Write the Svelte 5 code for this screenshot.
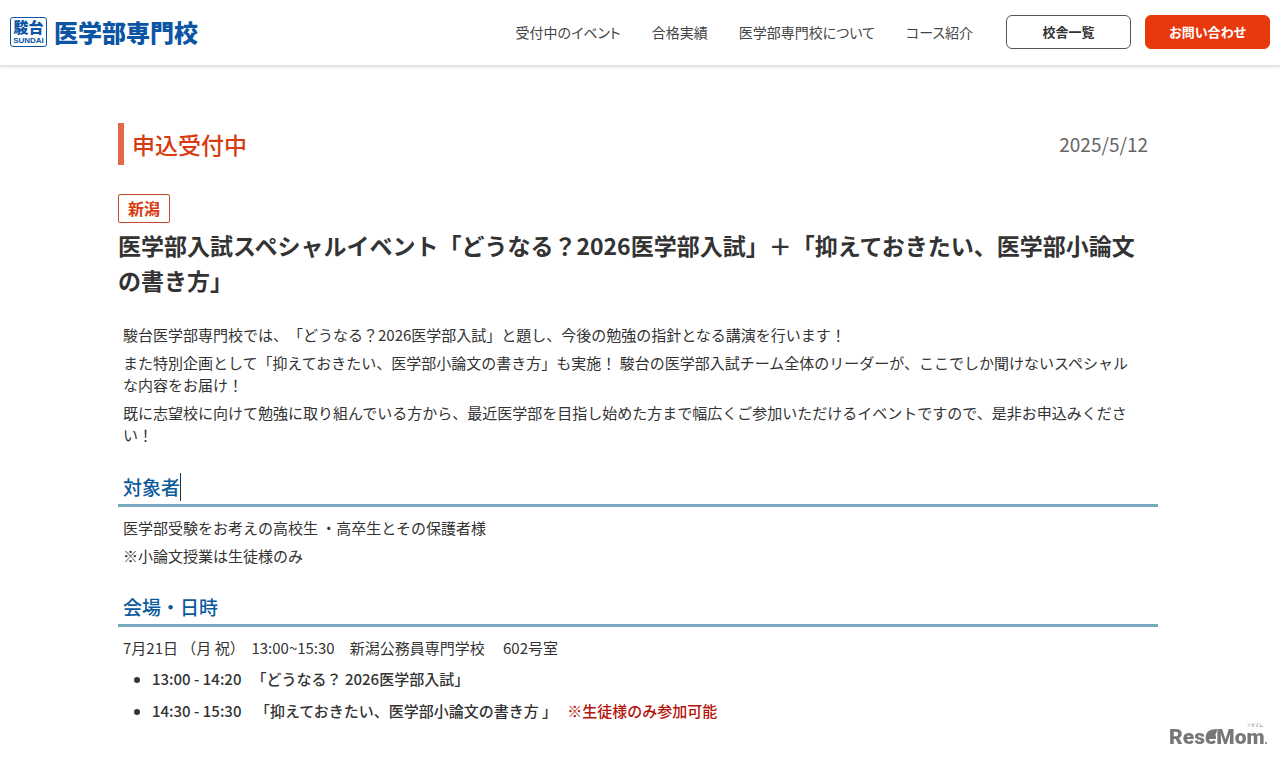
<script>
    const navLinks = ["受付中のイベント", "合格実績", "医学部専門校について", "コース紹介"]

    const intro = [
        "駿台医学部専門校では、「どうなる？2026医学部入試」と題し、今後の勉強の指針となる講演を行います！",
        "また特別企画として「抑えておきたい、医学部小論文の書き方」も実施！ 駿台の医学部入試チーム全体のリーダーが、ここでしか聞けないスペシャルな内容をお届け！",
        "既に志望校に向けて勉強に取り組んでいる方から、最近医学部を目指し始めた方まで幅広くご参加いただけるイベントですので、是非お申込みください！"
    ]

    const target = ["医学部受験をお考えの高校生 ・高卒生とその保護者様", "※小論文授業は生徒様のみ"]
</script>

<header>
    <a class="logo" href="#top">
        <span class="mark">
            <span class="mark-name">駿台</span>
            <span class="mark-sub">SUNDAI</span>
        </span>
        <span class="logo-name">医学部専門校</span>
    </a>
    <nav>
        {#each navLinks as link}
            <a href="#nav">{link}</a>
        {/each}
    </nav>
    <div class="buttons">
        <a class="btn" href="#schools">校舎一覧</a>
        <a class="btn contact" href="#contact">お問い合わせ</a>
    </div>
</header>

<main>
    <div class="status">
        <p class="status-name">申込受付中</p>
        <time datetime="2025-05-12">2025/5/12</time>
    </div>

    <span class="area">新潟</span>
    <h1>医学部入試スペシャルイベント「どうなる？2026医学部入試」＋「抑えておきたい、医学部小論文の書き方」</h1>

    <div class="intro">
        {#each intro as text}
            <p>{text}</p>
        {/each}
    </div>

    <section>
        <h2>対象者<span class="caret"></span></h2>
        {#each target as text}
            <p>{text}</p>
        {/each}
    </section>

    <section>
        <h2>会場・日時</h2>
        <p>7月21日 （月 祝） &nbsp;13:00~15:30　新潟公務員専門学校　 602号室</p>
        <ul>
            <li>13:00 - 14:20 &nbsp;&nbsp;「どうなる？ 2026医学部入試」</li>
            <li>14:30 - 15:30 &nbsp;&nbsp;&nbsp;「抑えておきたい、医学部小論文の書き方 」 &nbsp;&nbsp;<span class="note">※生徒様のみ参加可能</span></li>
        </ul>
    </section>
</main>

<div class="watermark">
    <svg width="100" height="32" viewBox="0 0 100 32" role="img" aria-label="ReseMom">
        <text class="letters" x="1" y="25">ReseMom</text>
        <!-- leaf over the second e -->
        <path d="M38 19C37 13 42 10 49 10C49 15 46 19 41 20Z" />
        <circle cx="98" cy="24" r="1" />
        <text class="ruby" x="79" y="8">リセマム</text>
    </svg>
</div>

<style>
    :global(body) {
        background: #fff;
        color: #333;
        font-family: "Noto Sans CJK JP", sans-serif;
        font-size: 15px;
        line-height: 22px;
        text-spacing-trim: space-all;
    }

    a {
        color: inherit;
        text-decoration: none;
    }

    p, h1, h2, ul {
        margin: 0;
    }

    header {
        display: flex;
        align-items: center;
        height: 63px;
        padding: 0 10px 2px;
        border-bottom: 1px solid #e0e0e0;
        box-shadow: 0 1px 3px rgba(0, 0, 0, 0.15);
    }

    .logo {
        display: flex;
        align-items: center;
        gap: 7px;
        margin-right: auto;
        color: #0b55a4;
        font-weight: 900;
    }

    .mark {
        display: flex;
        flex-direction: column;
        align-items: center;
        box-sizing: border-box;
        width: 37px;
        height: 30px;
        border: 1px solid #0b55a4;
        border-radius: 3px;
    }

    .mark-name {
        font-size: 15px;
        line-height: 18px;
    }

    .mark-sub {
        font-family: "Liberation Sans", sans-serif;
        font-size: 8px;
        line-height: 9px;
        font-weight: bold;
    }

    .logo-name {
        font-size: 24px;
        line-height: 30px;
    }

    nav {
        display: flex;
        gap: 31px;
        margin-right: 33px;
        color: #444;
        font-size: 14px;
        font-feature-settings: "palt";
    }

    .buttons {
        display: flex;
        gap: 14px;
    }

    .btn {
        box-sizing: border-box;
        width: 125px;
        border: 1px solid #555;
        border-radius: 6px;
        font-size: 13px;
        line-height: 32px;
        font-weight: bold;
        text-align: center;
        font-feature-settings: "palt";
    }

    .contact {
        border-color: #e8380d;
        background: #e8380d;
        color: #fff;
    }

    main {
        padding: 57px 122px 30px 118px;
    }

    .status {
        display: flex;
        align-items: center;
        justify-content: space-between;
        margin-bottom: 29px;
        padding: 0 10px 0 8px;
        border-left: 6px solid #e5674a;
        line-height: 42px;
    }

    .status-name {
        color: #d93a10;
        font-size: 23px;
        font-weight: 500;
    }

    time {
        color: #666;
        font-size: 19px;
    }

    .area {
        display: block;
        box-sizing: border-box;
        width: fit-content;
        margin-bottom: 5px;
        padding: 0 9px;
        border: 1px solid #c8492c;
        border-radius: 2px;
        color: #d93a10;
        font-size: 16px;
        line-height: 27px;
        font-weight: bold;
    }

    h1 {
        margin-bottom: 26px;
        padding-right: 10px;
        font-size: 23px;
        line-height: 35px;
        font-weight: bold;
    }

    .intro {
        margin-bottom: 27px;
    }

    section {
        margin-bottom: 26px;
    }

    .intro p, section p {
        padding: 0 22px 0 5px;
    }

    p + p {
        margin-top: 6px;
    }

    h2 {
        display: flex;
        margin-bottom: 10px;
        padding: 0 5px 3px;
        border-bottom: 3px solid #7aa7c2;
        color: #0b5a9c;
        font-size: 19px;
        line-height: 28px;
        font-weight: 500;
    }

    .caret {
        width: 1px;
        background: #234;
    }

    ul {
        margin-top: 4px;
        padding-left: 34px;
        line-height: 32px;
        font-weight: 500;
    }

    .note {
        color: #b5120a;
    }

    /* site mark over the bottom corner of the page */
    .watermark {
        position: fixed;
        right: 12px;
        bottom: 7px;
        line-height: 0;
    }

    .watermark svg {
        overflow: visible;
        fill: #777;
    }

    .letters {
        font-family: Roboto, sans-serif;
        font-size: 21px;
        font-weight: 900;
    }

    .ruby {
        font-size: 4px;
    }
</style>
